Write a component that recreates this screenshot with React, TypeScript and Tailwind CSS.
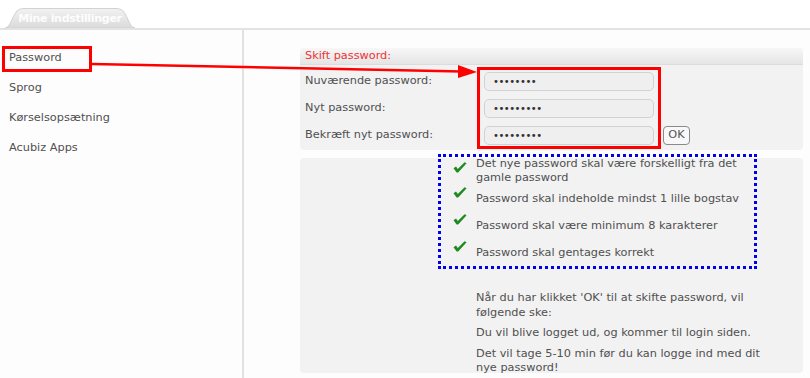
const MENU = ['Password', 'Sprog', 'Kørselsopsætning', 'Acubiz Apps'];

const FIELDS = [
	{ label: 'Nuværende password:', dots: '••••••••' },
	{ label: 'Nyt password:', dots: '•••••••••' },
	{ label: 'Bekræft nyt password:', dots: '•••••••••' },
];

function Check() {
	return (
		<svg width="14" height="11" viewBox="0 0 14 11" className="shrink-0">
			<path d="M0.5 6.2 L3 4.6 L4.8 7 L11.6 0.3 L13.6 1.3 L5.2 10.6 L3.6 10.6 Z" fill="#1f8a1f" />
		</svg>
	);
}

function Tab() {
	return (
		<div className="relative ml-[5px] w-[130px] h-[20px] flex items-center justify-center">
			<svg width="130" height="20" viewBox="0 0 130 20" className="absolute inset-0">
				<defs>
					<linearGradient id="tabg" x1="0" y1="0" x2="0" y2="1">
						<stop offset="0" stopColor="#f2f2f2" />
						<stop offset="1" stopColor="#dadada" />
					</linearGradient>
				</defs>
				<path d="M0 20 C6 20 8 4 14 1.5 Q16 0.5 19 0.5 L111 0.5 Q114 0.5 116 1.5 C122 4 124 20 130 20 Z" fill="url(#tabg)" stroke="#d2d2d2" strokeWidth="1" />
			</svg>
			<span className="relative text-white/90 font-bold text-[11px] tracking-[-0.3px] mt-[2px]">Mine indstillinger</span>
		</div>
	);
}

export default function App() {
	return (
		<div className="relative w-[810px] h-[378px] overflow-hidden bg-[#fdfdfd] font-['DejaVu_Sans',Verdana,sans-serif] text-[11.3px] text-[#505050]">
			<div className="h-[28px] pt-[8px] bg-white">
				<Tab />
			</div>
			<div className="h-[2px] bg-[#e3e3e3]" />

			<div className="flex h-[348px]">
				{/* sidebar */}
				<div className="w-[244px] shrink-0 border-r-[2px] border-[#e2e2e2] pt-[13px]">
					{MENU.map((item, i) => (
						<div key={item} className="relative h-[30px] flex items-center pl-[9px]">
							{item}
							{i === 0 && <div className="absolute left-[2px] top-[3px] w-[90px] h-[26px] border-[3px] border-[#f00]" />}
						</div>
					))}
				</div>

				{/* main */}
				<div className="flex-1 pl-[56px] pr-[7px] pt-[18px]">
					<div className="relative bg-[#f2f2f2] rounded-[4px]">
						<div className="h-[17px] flex items-center pl-[5px] rounded-t-[4px] bg-gradient-to-b from-[#f7f7f7] to-[#e5e5e5] border-b border-[#dcdcdc] text-[#ee3333]">
							Skift password:
						</div>
						<div className="pt-[3px] pb-[1px]">
							{FIELDS.map((f, i) => (
								<div key={f.label} className="h-[27px] flex items-center">
									<div className="w-[184px] pl-[5px]">{f.label}</div>
									<div className="w-[170px] h-[19px] rounded-[5px] border border-[#d2d2d2] bg-[#efefef] pl-[8px] flex items-center text-[#333] text-[10px] tracking-[-0.5px]">
										{f.dots}
									</div>
									{i === 2 && (
										<div className="ml-[9px] w-[27px] h-[19px] rounded-[4px] border border-[#8a8a8a] bg-[#f8f8f8] flex items-center justify-center text-[#555]">
											OK
										</div>
									)}
								</div>
							))}
						</div>
						<div className="absolute left-[177px] top-[19px] w-[184px] h-[82px] border-[3px] border-[#f00]" />
					</div>

					<div className="mt-[8px] h-[215px] bg-[#f2f2f2] rounded-[4px] pt-px">
						<div className="ml-[138px] -mt-[5px] w-[319px] h-[115px] border-[3px] border-dotted border-[#0000ee]">
							<div className="h-[28px] flex items-start pl-[12px]">
								<div className="mt-[5px]"><Check /></div>
								<div className="ml-[9px] leading-[14px] whitespace-nowrap">
									Det nye password skal være forskelligt fra det<br />gamle password
								</div>
							</div>
							{['Password skal indeholde mindst 1 lille bogstav', 'Password skal være minimum 8 karakterer', 'Password skal gentages korrekt'].map(t => (
								<div key={t} className="h-[27px] flex items-start pl-[12px]">
									<div className="mt-[2px]"><Check /></div>
									<div className="ml-[9px] mt-[7px] leading-[14px] whitespace-nowrap">{t}</div>
								</div>
							))}
						</div>
						<div className="ml-[176px] mt-[22px] leading-[14.5px] whitespace-nowrap">
							<p className="mb-[6px]">Når du har klikket 'OK' til at skifte password, vil<br />følgende ske:</p>
							<p className="mb-[6px]">Du vil blive logget ud, og kommer til login siden.</p>
							<p>Det vil tage 5-10 min før du kan logge ind med dit<br />nye password!</p>
						</div>
					</div>
				</div>
			</div>

			{/* annotation arrow */}
			<svg className="absolute left-0 top-0 pointer-events-none" width="810" height="378">
				<line x1="92" y1="64" x2="462" y2="71.5" stroke="#f00" strokeWidth="2.5" />
				<polygon points="477,72 458,65 458,78" fill="#f00" />
			</svg>
		</div>
	);
}
